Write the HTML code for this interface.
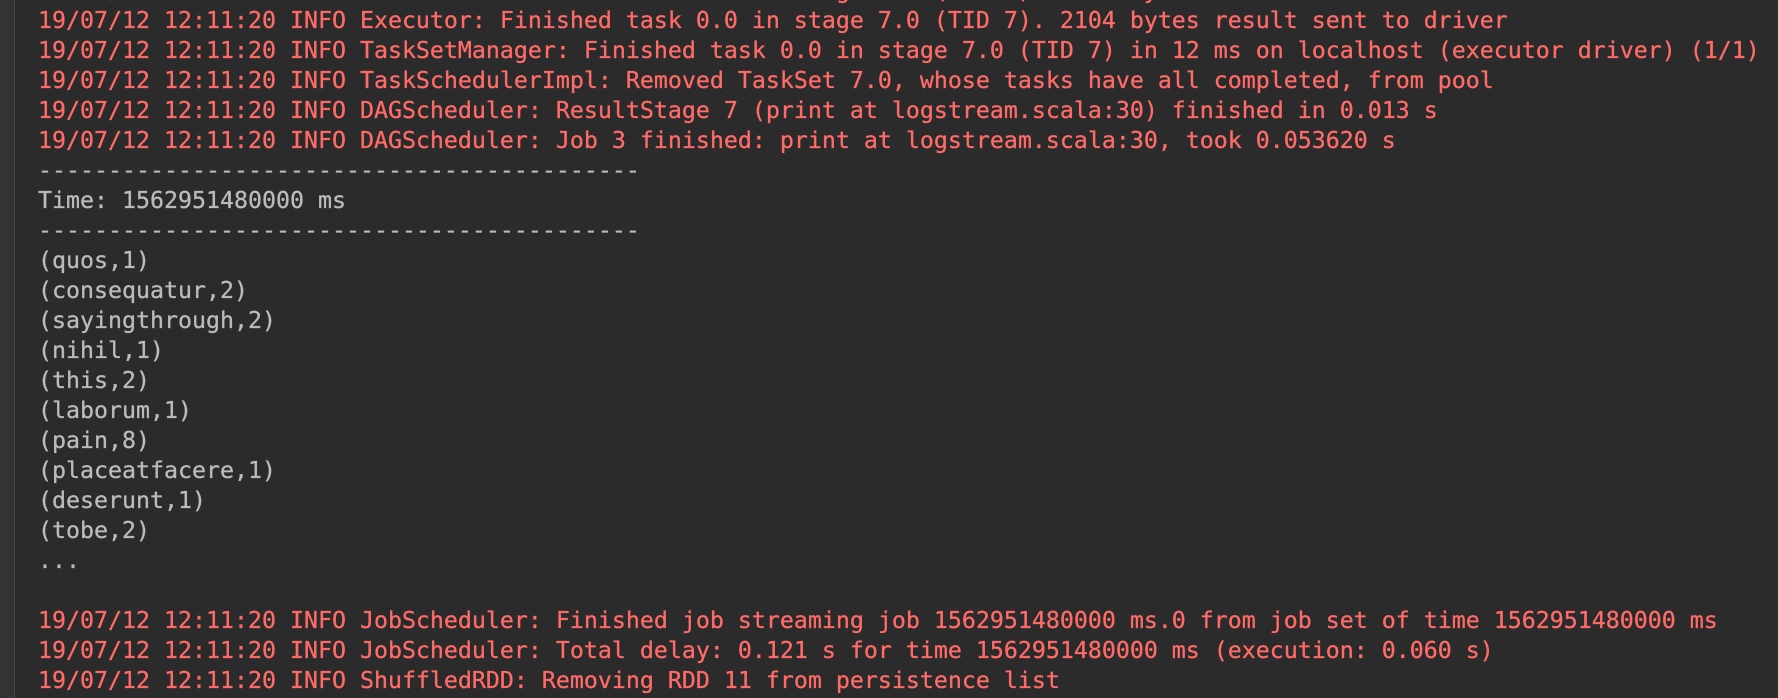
<!DOCTYPE html>
<html><head><meta charset="utf-8"><style>
html,body{margin:0;padding:0;width:1778px;height:698px;overflow:hidden;background:#2b2b2b;}
.g{position:absolute;left:0;top:0;width:14px;height:698px;background:#313335;border-right:1px solid #45484a;}
pre{position:absolute;left:38px;top:-24px;margin:0;font-family:"DejaVu Sans Mono","Liberation Mono",monospace;font-size:23.25px;line-height:30px;color:#bbbbbb;white-space:pre;-webkit-text-stroke:0.3px currentColor;}
.r{color:#ff6b68;}
</style></head><body>
<div class="g"></div>
<pre><span class="r">19/07/12 12:11:20 INFO Executor: Finished task 0.0 in stage 7.0 (TID 7). 2104 bytes</span>
<span class="r">19/07/12 12:11:20 INFO Executor: Finished task 0.0 in stage 7.0 (TID 7). 2104 bytes result sent to driver</span>
<span class="r">19/07/12 12:11:20 INFO TaskSetManager: Finished task 0.0 in stage 7.0 (TID 7) in 12 ms on localhost (executor driver) (1/1)</span>
<span class="r">19/07/12 12:11:20 INFO TaskSchedulerImpl: Removed TaskSet 7.0, whose tasks have all completed, from pool</span>
<span class="r">19/07/12 12:11:20 INFO DAGScheduler: ResultStage 7 (print at logstream.scala:30) finished in 0.013 s</span>
<span class="r">19/07/12 12:11:20 INFO DAGScheduler: Job 3 finished: print at logstream.scala:30, took 0.053620 s</span>
-------------------------------------------
Time: 1562951480000 ms
-------------------------------------------
(quos,1)
(consequatur,2)
(sayingthrough,2)
(nihil,1)
(this,2)
(laborum,1)
(pain,8)
(placeatfacere,1)
(deserunt,1)
(tobe,2)
...

<span class="r">19/07/12 12:11:20 INFO JobScheduler: Finished job streaming job 1562951480000 ms.0 from job set of time 1562951480000 ms</span>
<span class="r">19/07/12 12:11:20 INFO JobScheduler: Total delay: 0.121 s for time 1562951480000 ms (execution: 0.060 s)</span>
<span class="r">19/07/12 12:11:20 INFO ShuffledRDD: Removing RDD 11 from persistence list</span>
</pre>
</body></html>
